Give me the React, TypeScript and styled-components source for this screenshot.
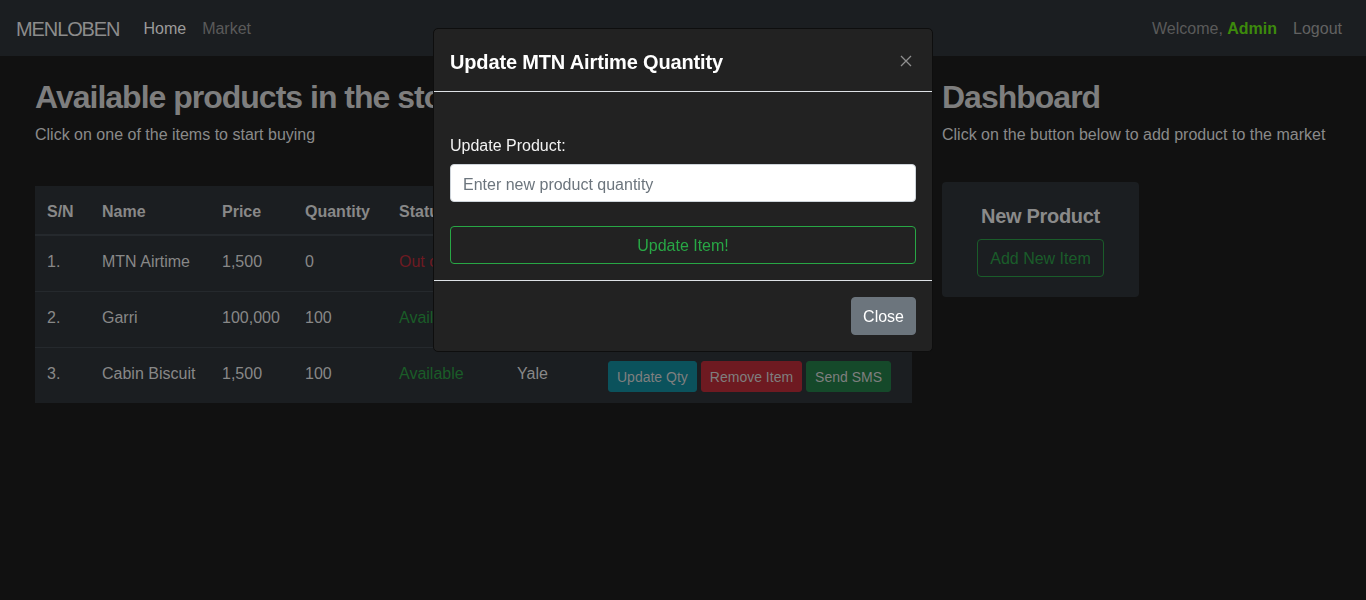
import React from "react";
import styled, { createGlobalStyle } from "styled-components";

const Global = createGlobalStyle`
  html, body {
    margin: 0;
    padding: 0;
    background: #111111;
    font-family: "Liberation Sans", Arial, sans-serif;
    font-size: 16px;
    line-height: 1.5;
  }
  #root { min-height: 600px; background: #111111; }
  * { box-sizing: border-box; }
`;

const Navbar = styled.nav`
  height: 56px;
  background: #1b1e21;
  display: flex;
  align-items: center;
  padding: 8px 16px;
`;

const Brand = styled.a`
  font-size: 20px;
  line-height: 30px;
  padding: 6px 0 4px;
  margin-right: 16px;
  letter-spacing: -1.1px;
  color: #8c8c8c;
  text-decoration: none;
`;

const NavList = styled.div<{ $right?: boolean }>`
  display: flex;
  align-items: center;
  margin-left: ${(p) => (p.$right ? "auto" : "0")};
`;

const NavLink = styled.a<{ $tone: "active" | "muted" | "dim" }>`
  padding: 9px 8px 7px;
  line-height: 24px;
  text-decoration: none;
  color: ${(p) =>
    p.$tone === "active" ? "#9b9b9b" : p.$tone === "muted" ? "#5a5a5a" : "#626262"};
`;

const Admin = styled.strong`
  color: #3d8a0c;
  font-weight: 700;
`;

const Main = styled.main`
  display: grid;
  grid-template-columns: 877px 1fr;
  column-gap: 30px;
  padding: 22px 35px 0;
`;

const Column = styled.section``;

const Heading = styled.h2`
  margin: 0 0 7px;
  font-size: 32px;
  line-height: 38.4px;
  font-weight: 700;
  letter-spacing: -1px;
  color: #7e7e7e;
`;

const Lead = styled.p<{ $gap: number }>`
  margin: 0 0 ${(p) => p.$gap}px;
  color: #8a8a8a;
  line-height: 24px;
`;

const Table = styled.table`
  width: 877px;
  table-layout: fixed;
  border-collapse: collapse;
  background: #1b1e21;
  color: #888888;
`;

const Th = styled.th<{ $w?: number }>`
  width: ${(p) => (p.$w ? `${p.$w}px` : "auto")};
  text-align: left;
  padding: 14px 12px 10px;
  line-height: 24px;
  font-weight: 700;
  border-bottom: 2px solid #25292d;
  white-space: nowrap;
  overflow: hidden;
`;

const Td = styled.td<{ $status?: "out" | "ok" }>`
  padding: 14px 12px 10px;
  line-height: 24px;
  vertical-align: top;
  border-top: 1px solid #25292d;
  white-space: nowrap;
  color: ${(p) => (p.$status === "out" ? "#6e1a22" : p.$status === "ok" ? "#1a5c28" : "#888888")};
`;

const ActionCell = styled.td`
  padding: 13px 12px 11px;
  vertical-align: top;
  border-top: 1px solid #25292d;
`;

const Actions = styled.div`
  display: flex;
  gap: 4px;
`;

const SmallBtn = styled.button<{ $bg: string }>`
  font-family: inherit;
  font-size: 14px;
  line-height: 21px;
  padding: 5px 8px 3px;
  border: 1px solid ${(p) => p.$bg};
  border-radius: 3px;
  background: ${(p) => p.$bg};
  color: #7f7f7f;
  white-space: nowrap;
`;

const Card = styled.div`
  width: 197px;
  margin-top: 35px;
  padding: 22px 0 20px;
  background: #1b1e21;
  border-radius: 4px;
  text-align: center;
`;

const CardTitle = styled.h5`
  margin: 0 0 11px;
  font-size: 20px;
  line-height: 24px;
  font-weight: 700;
  letter-spacing: -0.3px;
  color: #8a8a8a;
`;

const OutlineBtn = styled.button<{ $color: string; $block?: boolean }>`
  font-family: inherit;
  font-size: 16px;
  line-height: 24px;
  padding: 7px 12px 5px;
  background: transparent;
  border: 1px solid ${(p) => p.$color};
  color: ${(p) => p.$color};
  border-radius: 4px;
  width: ${(p) => (p.$block ? "100%" : "auto")};
`;

const Overlay = styled.div`
  position: fixed;
  inset: 0;
  display: flex;
  justify-content: center;
  align-items: flex-start;
  padding-top: 28px;
`;

const Modal = styled.div`
  width: 500px;
  background: #222222;
  border: 1px solid #0e0e0e;
  border-radius: 5px;
  color: #ffffff;
`;

const ModalHeader = styled.div`
  display: flex;
  align-items: center;
  justify-content: space-between;
  padding: 16px;
  border-bottom: 1px solid #dee2e6;
`;

const ModalTitle = styled.h5`
  margin: 0;
  padding-top: 2px;
  height: 30px;
  font-size: 20px;
  line-height: 30px;
  font-weight: 700;
  letter-spacing: -0.15px;
`;

const CloseX = styled.button`
  background: none;
  border: none;
  padding: 2px 4px 0 0;
  display: flex;
`;

const ModalBody = styled.div`
  padding: 16px;
`;

const Label = styled.label`
  display: block;
  margin: 26px 0 6px;
  line-height: 24px;
  color: #f2f2f2;
`;

const Input = styled.input`
  display: block;
  width: 100%;
  height: 38px;
  padding: 8px 12px 4px;
  font-family: inherit;
  font-size: 16px;
  border: 1px solid #ced4da;
  border-radius: 4px;
  background: #ffffff;
  color: #495057;
  margin-bottom: 24px;
  &::placeholder { color: #6c757d; }
`;

const ModalFooter = styled.div`
  display: flex;
  justify-content: flex-end;
  padding: 12px;
  border-top: 1px solid #dee2e6;
`;

const SolidBtn = styled.button`
  margin: 4px;
  font-family: inherit;
  font-size: 16px;
  line-height: 24px;
  padding: 7px 11px 5px;
  background: #6c757d;
  border: 1px solid #6c757d;
  color: #ffffff;
  border-radius: 4px;
`;

const products = [
  { sn: "1.", name: "MTN Airtime", price: "1,500", qty: "0", status: "out" as const, owner: "Yale" },
  { sn: "2.", name: "Garri", price: "100,000", qty: "100", status: "ok" as const, owner: "Yale" },
  { sn: "3.", name: "Cabin Biscuit", price: "1,500", qty: "100", status: "ok" as const, owner: "Yale" },
];

export default function App() {
  return (
    <>
      <Global />
      <Navbar>
        <Brand>MENLOBEN</Brand>
        <NavList>
          <NavLink $tone="active">Home</NavLink>
          <NavLink $tone="muted">Market</NavLink>
        </NavList>
        <NavList $right>
          <NavLink $tone="muted">
            Welcome, <Admin>Admin</Admin>
          </NavLink>
          <NavLink $tone="dim">Logout</NavLink>
        </NavList>
      </Navbar>
      <Main>
        <Column>
          <Heading>Available products in the store</Heading>
          <Lead $gap={39}>Click on one of the items to start buying</Lead>
          <Table>
            <thead>
              <tr>
                <Th $w={55}>S/N</Th>
                <Th $w={120}>Name</Th>
                <Th $w={83}>Price</Th>
                <Th $w={94}>Quantity</Th>
                <Th $w={118}>Status</Th>
                <Th $w={91}>Owner</Th>
                <Th>Actions</Th>
              </tr>
            </thead>
            <tbody>
              {products.map((p) => (
                <tr key={p.sn}>
                  <Td>{p.sn}</Td>
                  <Td>{p.name}</Td>
                  <Td>{p.price}</Td>
                  <Td>{p.qty}</Td>
                  <Td $status={p.status}>{p.status === "out" ? "Out of Stock" : "Available"}</Td>
                  <Td>{p.owner}</Td>
                  <ActionCell>
                    <Actions>
                      <SmallBtn $bg="#0b525c">Update Qty</SmallBtn>
                      <SmallBtn $bg="#6e1a21">Remove Item</SmallBtn>
                      <SmallBtn $bg="#15492a">Send SMS</SmallBtn>
                    </Actions>
                  </ActionCell>
                </tr>
              ))}
            </tbody>
          </Table>
        </Column>
        <Column>
          <Heading>Dashboard</Heading>
          <Lead $gap={0}>Click on the button below to add product to the market</Lead>
          <Card>
            <CardTitle>New Product</CardTitle>
            <OutlineBtn $color="#1a5c2a">Add New Item</OutlineBtn>
          </Card>
        </Column>
      </Main>
      <Overlay>
        <Modal>
          <ModalHeader>
            <ModalTitle>Update MTN Airtime Quantity</ModalTitle>
            <CloseX aria-label="Close">
              <svg width="12" height="12" viewBox="0 0 12 12">
                <path d="M1 1 L11 11 M11 1 L1 11" stroke="#8f8f8f" strokeWidth="1.3" fill="none" />
              </svg>
            </CloseX>
          </ModalHeader>
          <ModalBody>
            <Label htmlFor="qty">Update Product:</Label>
            <Input id="qty" placeholder="Enter new product quantity" />
            <OutlineBtn $color="#28a745" $block>
              Update Item!
            </OutlineBtn>
          </ModalBody>
          <ModalFooter>
            <SolidBtn>Close</SolidBtn>
          </ModalFooter>
        </Modal>
      </Overlay>
    </>
  );
}
